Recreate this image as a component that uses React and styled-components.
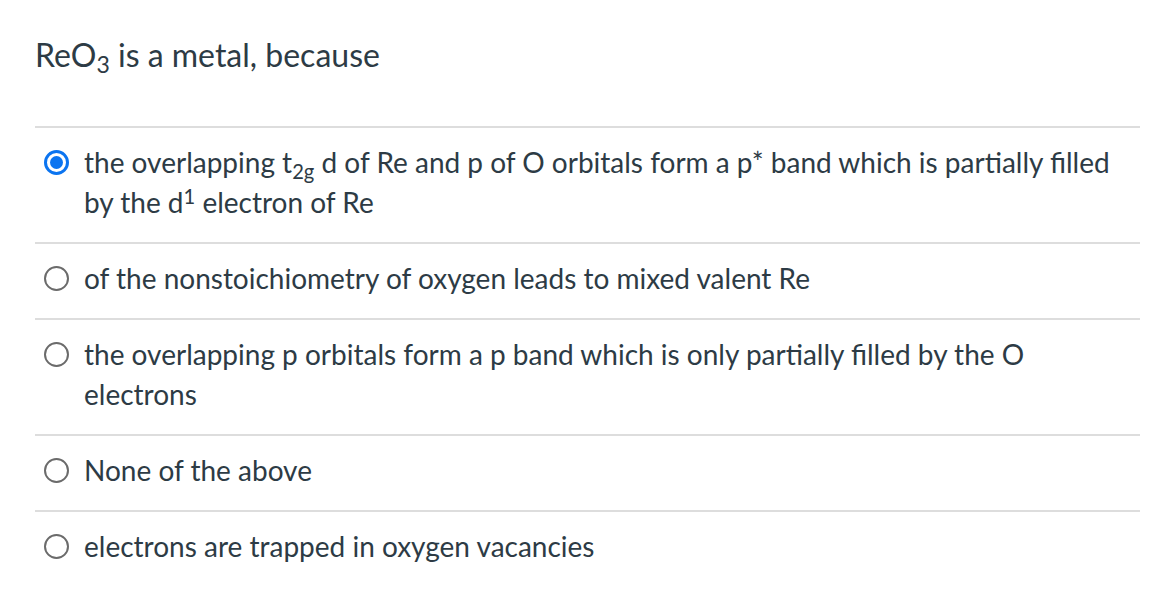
import React from 'react';
import styled, { createGlobalStyle } from 'styled-components';

const GlobalStyle = createGlobalStyle`
  html, body {
    margin: 0;
    padding: 0;
    background: #ffffff;
  }
  body {
    font-family: Lato, "Liberation Sans", sans-serif;
    color: #2d3b45;
  }
`;

const Page = styled.div`
  width: 1172px;
  height: 590px;
  overflow: hidden;
  box-sizing: border-box;
  padding: 35px 32px 0 35px;
`;

const Question = styled.div`
  font-size: 32px;
  line-height: 40px;
  margin: 0 0 51px;
`;

const AnswerList = styled.div`
  display: flex;
  flex-direction: column;
`;

const Answer = styled.label`
  display: flex;
  align-items: flex-start;
  gap: 15px;
  padding: 14px 20px 20px 9px;
  border-top: 2px solid #dddddd;
  font-size: 28px;
  line-height: 40px;
`;

const Radio = styled.span`
  flex: none;
  box-sizing: border-box;
  width: 25px;
  height: 25px;
  margin-top: 8px;
  border-radius: 50%;
  border: ${({ $checked }) => ($checked ? '3px solid #0b74f0' : '2px solid #6b6b6b')};
  display: flex;
  align-items: center;
  justify-content: center;

  &::after {
    content: '';
    display: ${({ $checked }) => ($checked ? 'block' : 'none')};
    width: 13px;
    height: 13px;
    border-radius: 50%;
    background: #0b74f0;
  }
`;

const Text = styled.span`
  flex: 1;
`;

const Sub = styled.sub`
  font-size: 0.72em;
  line-height: 0;
  vertical-align: -0.28em;
`;

const Sup = styled.sup`
  font-size: 0.72em;
  line-height: 0;
  vertical-align: 0.45em;
`;

const answers = [
  {
    checked: true,
    text: (
      <>
        the overlapping t<Sub>2g</Sub> d of Re and p of O orbitals form a p* band which is partially filled by the d
        <Sup>1</Sup> electron of Re
      </>
    ),
  },
  { text: 'of the nonstoichiometry of oxygen leads to mixed valent Re' },
  { text: 'the overlapping p orbitals form a p band which is only partially filled by the O electrons' },
  { text: 'None of the above' },
  { text: 'electrons are trapped in oxygen vacancies' },
];

const App = () => (
  <>
    <GlobalStyle />
    <Page>
      <Question>
        ReO<Sub>3</Sub> is a metal, because
      </Question>
      <AnswerList>
        {answers.map((a, i) => (
          <Answer key={i}>
            <Radio $checked={a.checked} />
            <Text>{a.text}</Text>
          </Answer>
        ))}
      </AnswerList>
    </Page>
  </>
);

export default App;
